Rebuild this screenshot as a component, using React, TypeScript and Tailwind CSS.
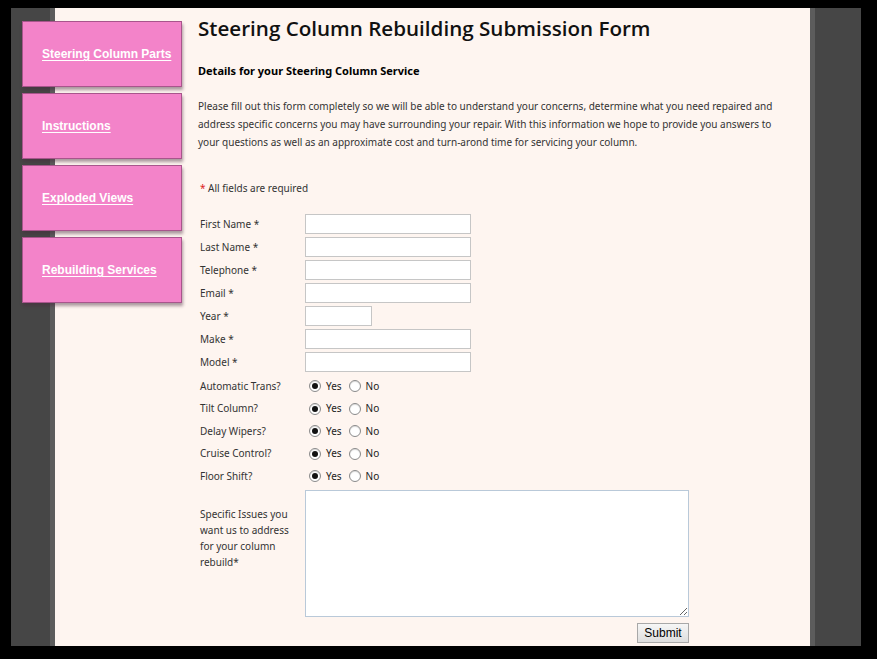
import React from "react";

const navItems = [
  "Steering Column Parts",
  "Instructions",
  "Exploded Views",
  "Rebuilding Services",
];

const textFields: { label: string; short?: boolean }[] = [
  { label: "First Name" },
  { label: "Last Name" },
  { label: "Telephone" },
  { label: "Email" },
  { label: "Year", short: true },
  { label: "Make" },
  { label: "Model" },
];

const radioFields = [
  "Automatic Trans?",
  "Tilt Column?",
  "Delay Wipers?",
  "Cruise Control?",
  "Floor Shift?",
];

function Radio({ checked }: { checked?: boolean }) {
  return (
    <span className="flex h-[12px] w-[12px] items-center justify-center rounded-full border border-[#8a8a8a] bg-white shadow-[inset_0_1px_1px_rgba(0,0,0,0.15)]">
      {checked && <span className="h-[6px] w-[6px] rounded-full bg-[#111]" />}
    </span>
  );
}

export default function App() {
  return (
    <div className="h-[659px] w-[877px] overflow-hidden bg-black pt-[8px] pl-[11px] pr-[16px] pb-[13px]">
      <div className="flex h-[638px] bg-[#464646]">
        <div className="ml-[39px] mr-[46px] flex flex-1 border-x-[5px] border-[#5c5c5c] bg-[#fef5f0]">
          {/* nav */}
          <div className="-ml-[33px] mt-[13px] flex w-[160px] shrink-0 flex-col gap-[6px]">
            {navItems.map((n) => (
              <div
                key={n}
                className="flex h-[66px] items-center border border-[#a8558c] bg-[#f383c9] pl-[19px] shadow-[1px_3px_3px_rgba(70,40,60,0.45)]"
              >
                <a
                  href="#"
                  className="text-[12px] font-bold text-white underline decoration-1 underline-offset-[2px]"
                  style={{ fontFamily: "'Liberation Sans', Arial, sans-serif" }}
                >
                  {n}
                </a>
              </div>
            ))}
          </div>
          {/* content */}
          <div
            className="ml-[16px] flex w-[590px] flex-col pt-[5px] text-[#222]"
            style={{ fontFamily: "'Noto Sans', Tahoma, sans-serif" }}
          >
            <h1
              className="text-[20.6px] font-semibold leading-[30px] text-[#111]"
              style={{ fontFamily: "'Open Sans', 'Noto Sans', sans-serif" }}
            >
              Steering Column Rebuilding Submission Form
            </h1>
            <h2 className="mt-[20px] text-[11px] font-bold leading-[16px] text-black">
              Details for your Steering Column Service
            </h2>
            <p className="mt-[18px] text-[10px] leading-[18px] text-[#333]">
              Please fill out this form completely so we will be able to understand your concerns, determine what you need repaired and
              address specific concerns you may have surrounding your repair. With this information we hope to provide you answers to
              your questions as well as an approximate cost and turn-arond time for servicing your column.
            </p>
            <p className="mt-[30px] pl-[2px] text-[10px] leading-[14px] text-[#333]">
              <span className="text-[#d22]">*</span> All fields are required
            </p>
            <div className="mt-[19px] flex flex-col gap-[3px] pl-[2px]">
              {textFields.map((f) => (
                <div key={f.label} className="flex h-[20px] items-center">
                  <label className="w-[105px] text-[10px] text-[#333]">{f.label} *</label>
                  <input
                    type="text"
                    className={`${f.short ? "w-[67px]" : "w-[166px]"} h-[20px] border border-[#c6c6c6] bg-white outline-none`}
                  />
                </div>
              ))}
            </div>
            <div className="mt-[3px] flex flex-col pl-[2px]">
              {radioFields.map((r) => (
                <div key={r} className="flex h-[22.5px] items-center text-[10px] text-[#333]">
                  <span className="w-[109px]">{r}</span>
                  <Radio checked />
                  <span className="ml-[5px] mr-[7px] text-[#222]">Yes</span>
                  <Radio />
                  <span className="ml-[5px] text-[#222]">No</span>
                </div>
              ))}
            </div>
            <div className="mt-[2px] flex pl-[2px]">
              <div className="w-[100px] pt-[16px] text-[10px] leading-[16.3px] text-[#333]">
                Specific Issues you want us to address for your column rebuild*
              </div>
              <div className="ml-[5px] flex flex-col items-end">
                <textarea className="h-[127px] w-[384px] resize border border-[#b9c9d9] bg-white outline-none" />
                <button
                  className="mt-[6px] h-[20px] w-[52px] border border-[#a8a8a8] bg-gradient-to-b from-[#f6f6f6] to-[#dedede] text-[12px] text-black"
                  style={{ fontFamily: "'Liberation Sans', Arial, sans-serif" }}
                >
                  Submit
                </button>
              </div>
            </div>
          </div>
        </div>
      </div>
    </div>
  );
}
